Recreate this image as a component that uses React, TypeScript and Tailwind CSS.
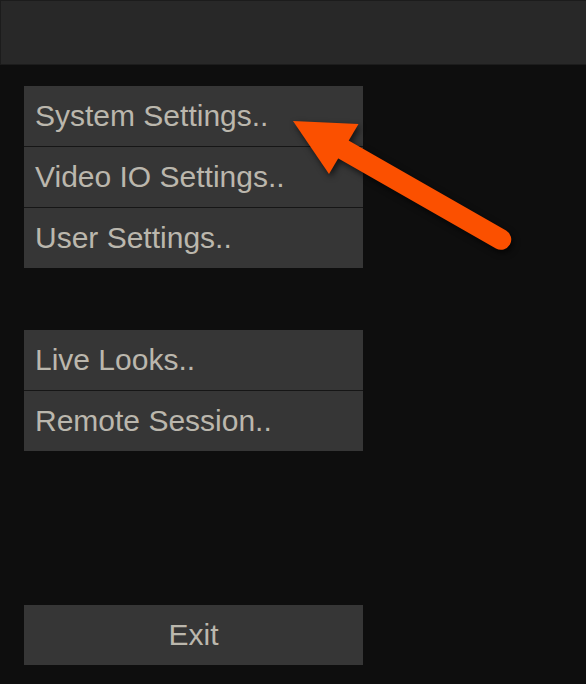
import React from "react";

const font = { fontFamily: '"Liberation Sans", Arial, sans-serif' };

function Row({ label, center = false }: { label: string; center?: boolean }) {
  return (
    <div
      className={`h-[60px] bg-[#363636] flex items-center text-[30px] leading-none text-[#bbb7ad] ${
        center ? "justify-center" : "pl-[11px]"
      }`}
    >
      {label}
    </div>
  );
}

export default function App() {
  return (
    <div className="relative w-[586px] h-[684px] bg-[#0e0e0e] overflow-hidden" style={font}>
      <div className="h-[65px] bg-[#282828] border-t border-l border-b border-[#1c1c1c]" />
      <div className="flex flex-col pl-6 pt-[21px] w-[363px]">
        <div className="flex flex-col gap-px bg-[#161616]">
          <Row label="System Settings.." />
          <Row label="Video IO Settings.." />
          <Row label="User Settings.." />
        </div>
        <div className="flex flex-col gap-px bg-[#161616] mt-[62px]">
          <Row label="Live Looks.." />
          <Row label="Remote Session.." />
        </div>
        <div className="mt-[154px]">
          <Row label="Exit" center />
        </div>
      </div>
      <svg
        className="absolute inset-0 pointer-events-none"
        width="586"
        height="684"
        viewBox="0 0 586 684"
        style={{ filter: "drop-shadow(2px 3px 3px rgba(0,0,0,0.65))" }}
      >
        <line x1="340" y1="147.5" x2="501" y2="239.5" stroke="#fb5000" strokeWidth="20.5" strokeLinecap="round" />
        <polygon points="293,121 358.5,124 329,174" fill="#fb5000" />
      </svg>
    </div>
  );
}
